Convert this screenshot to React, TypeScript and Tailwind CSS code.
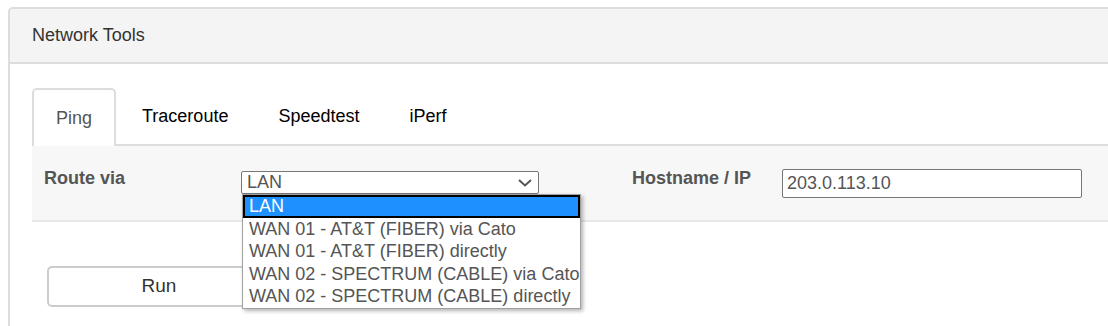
import React from 'react';

const routes = [
  'LAN',
  'WAN 01 - AT&T (FIBER) via Cato',
  'WAN 01 - AT&T (FIBER) directly',
  'WAN 02 - SPECTRUM (CABLE) via Cato',
  'WAN 02 - SPECTRUM (CABLE) directly',
];

const tabs = ['Ping', 'Traceroute', 'Speedtest', 'iPerf'];

const App: React.FC = () => {
  return (
    <div className="w-[1108px] h-[326px] overflow-hidden bg-white pt-[7px] pl-[8px] font-['Liberation_Sans',Arial,sans-serif]">
      <div className="w-[1200px] h-[400px] border-t-2 border-l-2 border-[#ddd] rounded-tl-[5px]">
        {/* Panel header */}
        <div className="h-[55px] bg-[#f4f4f4] border-b-2 border-[#ddd] pl-[22px] flex items-center text-[18px] text-[#333] rounded-tl-[4px]">
          Network Tools
        </div>

        {/* Panel body */}
        <div className="pt-[24px] pl-[22px]">
          {/* Tabs */}
          <div className="flex h-[58px] border-b-2 border-[#ddd]">
            {tabs.map((t, i) => (
              <div
                key={t}
                className={
                  i === 0
                    ? 'h-[58px] px-[22px] mr-[2px] flex items-center border-2 border-b-0 border-[#ddd] rounded-t-[5px] bg-white text-[18px] text-[#555] relative z-10'
                    : 'h-[56px] px-[22px] mr-[2px] flex items-center border-2 border-transparent text-[18px] text-black'
                }
              >
                {t}
              </div>
            ))}
          </div>

          {/* Form area */}
          <div className="h-[76px] bg-[#f7f7f7] border-b-2 border-[#e8e8e8] pt-[22px] pl-[12px] flex items-start">
            <div className="w-[197px] text-[18px] leading-[21px] font-bold text-[#555]">Route via</div>
            <div className="relative mt-[3px]">
              <div className="w-[298px] h-[23px] border border-[#767676] rounded-[2px] bg-white flex items-center justify-between pl-[5px] pr-[6px] text-[18px] text-[#555]">
                <span>LAN</span>
                <svg width="14" height="8" viewBox="0 0 14 8" fill="none">
                  <path d="M1 1l6 5.5L13 1" stroke="#555" strokeWidth="2" />
                </svg>
              </div>
              {/* Open dropdown list */}
              <div className="absolute left-[1px] top-full w-[339px] bg-white border border-[#a0a0a0] shadow-[2px_2px_4px_rgba(0,0,0,0.3)] z-20">
                {routes.map((r, i) => (
                  <div
                    key={r}
                    className={
                      i === 0
                        ? 'h-[22.5px] leading-[18.5px] pl-[4px] border-2 border-black bg-[#1e90ff] text-white text-[18px] whitespace-nowrap'
                        : 'h-[22.5px] leading-[22.5px] pl-[6px] text-[#555] text-[18px] whitespace-nowrap'
                    }
                  >
                    {r}
                  </div>
                ))}
              </div>
            </div>
            <div className="ml-[93px] w-[150px] text-[18px] leading-[21px] font-bold text-[#555]">Hostname / IP</div>
            <div className="mt-[1px] w-[300px] h-[29px] border border-[#767676] rounded-[2px] bg-white pl-[4px] flex items-center text-[18px] text-[#555]">
              203.0.113.10
            </div>
          </div>

          {/* Actions */}
          <div className="mt-[44px] ml-[15px]">
            <button className="w-[224px] h-[41px] border-2 border-[#ccc] rounded-[5px] bg-white text-[19px] text-[#333]">
              Run
            </button>
          </div>
        </div>
      </div>
    </div>
  );
};

export default App;
